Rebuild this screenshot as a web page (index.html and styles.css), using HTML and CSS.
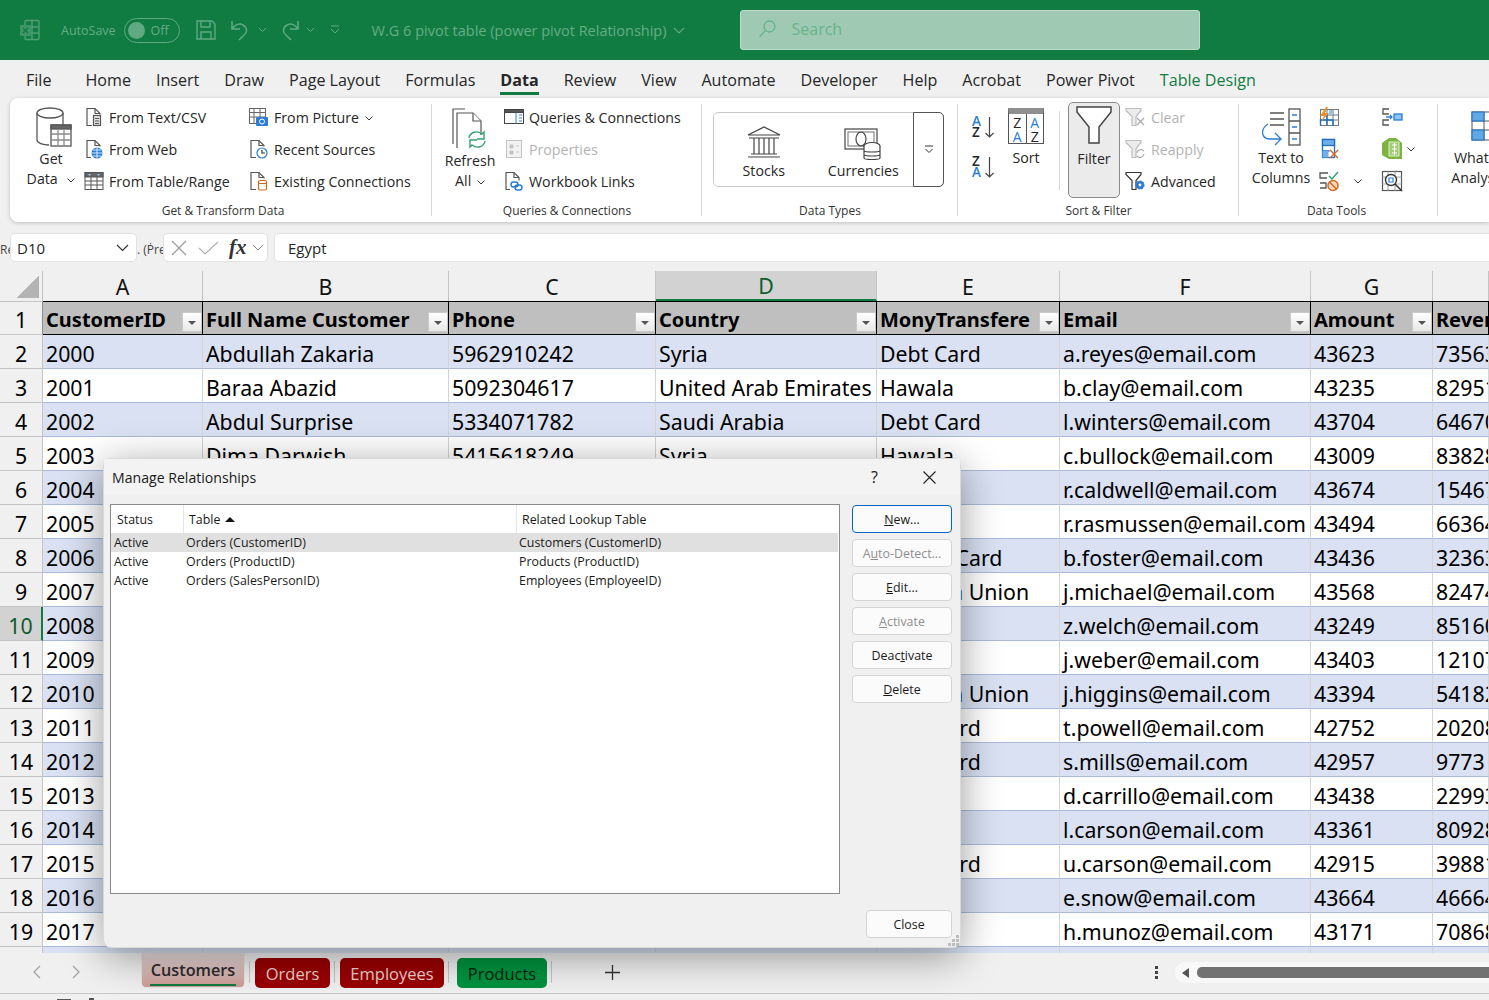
FILE: index.html
```html
<!DOCTYPE html>
<html lang="en">

<head>
    <meta charset="UTF-8">
    <meta name="viewport" content="width=device-width, initial-scale=1.0">
    <title>W.G 6 pivot table (power pivot Relationship)</title>
    <link rel="stylesheet" href="styles.css">
</head>

<body>
    <!-- title bar -->
    <header class="titlebar">
        <svg class="app-logo" width="22" height="22" viewBox="0 0 22 22" fill="none" stroke="#4f9f74" stroke-width="1.4"><rect x="6" y="1.500" width="14" height="19" rx="1"/><path d="M13 2v18M6 8h14M6 14h14"/><rect x="1" y="6" width="11" height="11" fill="#3f9467" stroke="none"/><path d="M4 9l5 5M9 9l-5 5" stroke="#0f7b40"/></svg>
        <span class="autosave">AutoSave</span>
        <span class="toggle"><i></i>Off</span>
        <svg class="tb-ic save" width="22" height="22" viewBox="0 0 22 22" fill="none" stroke="#5fa983" stroke-width="1.4"><path d="M2 2h15l3 3v15H2z"/><path d="M6 2v6h9V2M6 20v-7h10v7"/></svg>
        <svg class="tb-ic" width="22" height="22" viewBox="0 0 22 22" fill="none" stroke="#5fa983" stroke-width="1.5"><path d="M2 2v8h8M2 10c3-5 8-6 11-4 5 3 4 8 1 10l-5 5"/></svg>
        <svg class="tb-chev" width="9" height="6" viewBox="0 0 9 6" fill="none" stroke="#5fa983"><path d="M1 1l3.500 3.500L8 1"/></svg>
        <svg class="tb-ic" width="22" height="22" viewBox="0 0 22 22" fill="none" stroke="#5fa983" stroke-width="1.5"><path d="M20 2v8h-8M20 10c-3-5-8-6-11-4-5 3-4 8-1 10l5 5"/></svg>
        <svg class="tb-chev" width="9" height="6" viewBox="0 0 9 6" fill="none" stroke="#5fa983"><path d="M1 1l3.500 3.500L8 1"/></svg>
        <svg class="tb-more" width="10" height="10" viewBox="0 0 10 10" fill="none" stroke="#5fa983"><path d="M1 1h8M1 4l4 4 4-4"/></svg>
        <span class="doc-title">W.G 6 pivot table (power pivot Relationship)</span>
        <svg class="doc-chev" width="12" height="7" viewBox="0 0 12 7" fill="none" stroke="#5fa983" stroke-width="1.2"><path d="M1 1l5 5 5-5"/></svg>
        <div class="search">
            <svg width="20" height="20" viewBox="0 0 20 20" fill="none" stroke="#66b58a" stroke-width="1.3"><circle cx="11.500" cy="7.500" r="5.500"/><path d="M7.500 11.500L1.500 18"/></svg>
            <span>Search</span>
        </div>
    </header>

    <!-- menu tabs -->
    <nav class="menu">
        <span class="menu-file">File</span>
        <span>Home</span>
        <span>Insert</span>
        <span>Draw</span>
        <span>Page Layout</span>
        <span>Formulas</span>
        <span class="active">Data</span>
        <span>Review</span>
        <span>View</span>
        <span>Automate</span>
        <span>Developer</span>
        <span>Help</span>
        <span>Acrobat</span>
        <span>Power Pivot</span>
        <span class="menu-green">Table Design</span>
    </nav>

    <!-- ribbon -->
    <section class="ribbon">
        <div class="group g-transform">
            <div class="group-body">
                <div class="big get-data">
                    <svg width="38" height="42" viewBox="0 0 38 42" fill="none" stroke="#555" stroke-width="1.300"><ellipse cx="15" cy="6" rx="13" ry="5"/><path d="M2 6v27c0 3 6 5 12 5M28 6v12"/><rect x="16" y="18" width="20" height="21" fill="#fff"/><rect x="16" y="18" width="20" height="4" fill="#666"/><path d="M16 27h20M16 33h20M23 22v17M29 22v17" stroke="#8a8a8a"/></svg>
                    <span>Get</span>
                    <span>Data <svg class="chev" width="8" height="5" viewBox="0 0 8 5" fill="none" stroke="#333"><path d="M.5.500L4 4 7.500.500"/></svg></span>
                </div>
                <div class="small-col col-a">
                    <div class="sm"><svg width="22" height="20" viewBox="-1 0 22 20" fill="none" stroke="#555" stroke-width="1.200"><path d="M8 18.500H3v-17h8l5 5v1"/><path d="M11 1.500v5h5"/><rect x="9.500" y="8.500" width="7" height="10" fill="#e4e4e4"/><path d="M11 11.500h4M11 14h4M11 16.500h4"/></svg><span>From Text/CSV</span></div>
                    <div class="sm"><svg width="22" height="20" viewBox="-1 0 22 20" fill="none" stroke="#555" stroke-width="1.200"><path d="M7 18.500H3v-17h8l5 5v1"/><path d="M11 1.500v5h5"/><circle cx="13" cy="14" r="5.500" fill="#2b7cd3" stroke="none"/><path d="M7.500 14h11M13 8.500v11M9 11h8M9 17h8" stroke="#fff" stroke-width=".8"/></svg><span>From Web</span></div>
                    <div class="sm"><svg width="22" height="20" viewBox="0 0 22 20" fill="#fff" stroke="#555"><rect x="2" y="1.500" width="18" height="17"/><rect x="2" y="1.500" width="18" height="4.500" fill="#666"/><path d="M2 10h18M2 14h18M8 6v12M14 6v12"/><path d="M5 3l1.500 2L8 3zM14 3l1.500 2L17 3z" fill="#8cc8f5" stroke="none"/></svg><span>From Table/Range</span></div>
                </div>
                <div class="small-col col-b">
                    <div class="sm"><svg width="22" height="20" viewBox="0 0 22 20" fill="#fff" stroke="#666"><rect x="1.500" y="1.500" width="16" height="15"/><path d="M1.500 5.500h16M1.500 10h16M6 1.500v15M12 1.500v15"/><rect x="8" y="10" width="12" height="9" rx="1" fill="#2b7cd3" stroke="none"/><circle cx="14" cy="14.500" r="2.500" fill="#2b7cd3" stroke="#fff"/></svg><span>From Picture <svg class="chev" width="8" height="5" viewBox="0 0 8 5" fill="none" stroke="#333"><path d="M.5.500L4 4 7.500.500"/></svg></span></div>
                    <div class="sm"><svg width="22" height="20" viewBox="0 0 22 20" fill="none" stroke="#555" stroke-width="1.200"><path d="M8 18.500H3v-17h8l5 5v1"/><path d="M11 1.500v5h5"/><circle cx="14" cy="14" r="5" fill="#fff" stroke="#2b7cd3"/><path d="M14 11v3h3" stroke="#333"/></svg><span>Recent Sources</span></div>
                    <div class="sm"><svg width="22" height="20" viewBox="0 0 22 20" fill="none" stroke="#555" stroke-width="1.200"><path d="M8 18.500H3v-17h8l5 5v1"/><path d="M11 1.500v5h5"/><rect x="10.500" y="9.500" width="8" height="9.500" rx="1.500" fill="#fff" stroke="#d4691d"/><path d="M10.500 12.500h8" stroke="#d4691d"/></svg><span>Existing Connections</span></div>
                </div>
            </div>
            <div class="group-label">Get &amp; Transform Data</div>
        </div>

        <div class="group g-queries">
            <div class="group-body">
                <div class="big refresh">
                    <svg width="36" height="44" viewBox="0 0 36 44" fill="#fff" stroke="#555" stroke-width="1.200"><path d="M1 36V1h12"/><path d="M5 40V5h16l8 8v14"/><path d="M21 5v8h8"/><path d="M17 30c1-6 8-8 13-4l2-2v7h-7" stroke="#33a06f" fill="none" stroke-width="1.400"/><path d="M33 33c-1 6-8 8-13 4l-2 2v-7h7" stroke="#33a06f" fill="none" stroke-width="1.400"/></svg>
                    <span>Refresh</span>
                    <span>All <svg class="chev" width="8" height="5" viewBox="0 0 8 5" fill="none" stroke="#333"><path d="M.5.500L4 4 7.500.500"/></svg></span>
                </div>
                <div class="small-col col-q">
                    <div class="sm"><svg width="22" height="20" viewBox="0 0 22 20" fill="#fff" stroke="#444"><rect x="1.500" y="2.500" width="19" height="14"/><rect x="1.500" y="2.500" width="19" height="3" fill="#555"/><path d="M13 5.500v11" stroke="#2b7cd3"/><path d="M16 8h3M16 11h3M16 14h3" stroke="#2b7cd3"/></svg><span>Queries &amp; Connections</span></div>
                    <div class="sm off"><svg width="22" height="20" viewBox="0 0 22 20" fill="#f2f2f2" stroke="#c4c4c4"><rect x="3.500" y="1.500" width="15" height="17"/><path d="M7 6h3v3H7zM7 12h3v3H7zM13 7h3M13 13h3" fill="#c4c4c4"/></svg><span>Properties</span></div>
                    <div class="sm"><svg width="22" height="20" viewBox="0 0 22 20" fill="none" stroke="#555" stroke-width="1.200"><path d="M7 18.500H3v-17h8l5 5v3"/><path d="M11 1.500v5h5"/><rect x="8" y="11" width="7" height="5" rx="2.500" stroke="#2b7cd3" stroke-width="1.400"/><rect x="12" y="14" width="7" height="5" rx="2.500" stroke="#2b7cd3" stroke-width="1.400"/></svg><span>Workbook Links</span></div>
                </div>
            </div>
            <div class="group-label">Queries &amp; Connections</div>
        </div>

        <div class="group g-types">
            <div class="group-body">
                <div class="gallery">
                    <div class="gallery-item stocks">
                        <svg width="36" height="32" viewBox="0 0 36 32" fill="none" stroke="#444" stroke-width="1.200"><path d="M2 9L18 1l16 8zM3 12h30M5 28h26M2 31h32M8 12v16M13 12v16M18 12v16M23 12v16M28 12v16"/></svg>
                        <span>Stocks</span>
                    </div>
                    <div class="gallery-item currencies">
                        <svg width="38" height="34" viewBox="0 0 38 34" fill="none" stroke="#444" stroke-width="1.200"><rect x="1" y="2" width="32" height="20"/><rect x="4" y="5" width="26" height="14" stroke="#888"/><ellipse cx="17" cy="12" rx="5" ry="7"/><ellipse cx="28" cy="19" rx="8" ry="3.500" fill="#fff"/><path d="M20 19v12c0 2 16 2 16 0V19M20 23.500c0 2 16 2 16 0M20 27.500c0 2 16 2 16 0" fill="#fff"/></svg>
                        <span>Currencies</span>
                    </div>
                    <div class="gallery-more">
                        <svg width="10" height="9" viewBox="0 0 10 9" fill="none" stroke="#333"><path d="M1 1h8M1.500 4L5 7.500 8.500 4"/></svg>
                    </div>
                </div>
            </div>
            <div class="group-label">Data Types</div>
        </div>

        <div class="group g-sort">
            <div class="group-body">
                <div class="sort-arrows">
                    <div class="az"><span class="az-letters"><b class="blue">A</b><b>Z</b></span><svg width="9" height="21" viewBox="0 0 9 21" fill="none" stroke="#444" stroke-width="1.200"><path d="M4.500 0v20M.5 16l4 4 4-4"/></svg></div>
                    <div class="az"><span class="az-letters"><b>Z</b><b class="blue">A</b></span><svg width="9" height="21" viewBox="0 0 9 21" fill="none" stroke="#444" stroke-width="1.200"><path d="M4.500 0v20M.5 16l4 4 4-4"/></svg></div>
                </div>
                <div class="big sort-big">
                    <div class="sort-icon"><span>Z<br><b class="blue">A</b></span><span><b class="blue">A</b><br>Z</span></div>
                    <span>Sort</span>
                </div>
                <div class="sort-rule"></div>
                <div class="big filter-btn">
                    <svg width="36" height="38" viewBox="0 0 36 38" fill="#fff" stroke="#444" stroke-width="1.500"><path d="M1 1h34v5L23 21v16H13V21L1 6z"/></svg>
                    <span>Filter</span>
                </div>
                <div class="small-col col-f">
                    <div class="sm off"><svg width="22" height="20" viewBox="0 0 22 20" fill="none" stroke="#bdbdbd" stroke-width="1.200"><path d="M1 1.500h15v2l-5 6v9H7v-9L1 3.500z" fill="#ececec"/><path d="M12 11l7 7M19 11l-7 7" stroke="#a8a8a8"/></svg><span>Clear</span></div>
                    <div class="sm off"><svg width="22" height="20" viewBox="0 0 22 20" fill="none" stroke="#bdbdbd" stroke-width="1.200"><path d="M1 1.500h15v2l-5 6v9H7v-9L1 3.500z" fill="#ececec"/><path d="M12 14a4 4 0 0 1 7-2M19 15a4 4 0 0 1-7 2" stroke="#a8a8a8"/></svg><span>Reapply</span></div>
                    <div class="sm"><svg width="22" height="20" viewBox="0 0 22 20" fill="none" stroke="#333" stroke-width="1.200"><path d="M1 1.500h15v2l-5 6v9H7v-9L1 3.500z"/><circle cx="15" cy="14" r="4" fill="#2b7cd3" stroke="#2b7cd3" stroke-dasharray="2 1"/><circle cx="15" cy="14" r="1.400" fill="#fff" stroke="none"/></svg><span>Advanced</span></div>
                </div>
            </div>
            <div class="group-label">Sort &amp; Filter</div>
        </div>

        <div class="group g-tools">
            <div class="group-body">
                <div class="big text-cols">
                    <svg width="42" height="40" viewBox="0 0 42 40" fill="none" stroke="#555" stroke-width="1.300"><path d="M10 5h14M10 11h14M10 17h14"/><rect x="29" y="1" width="11" height="36" fill="#fff"/><path d="M29 13h11M29 25h11"/><path d="M32 7h5M32 19h5M32 31h5" stroke="#2b7cd3"/><path d="M8 16c-8 5-7 15 2 15h10M15 25l6 6-6 6" stroke="#2b7cd3"/></svg>
                    <span>Text to</span>
                    <span>Columns</span>
                </div>
                <div class="tool-col tool-a">
                    <div class="tool"><svg width="22" height="22" viewBox="0 0 22 22" fill="none" stroke="#777"><rect x="2.500" y="3.500" width="18" height="16"/><path d="M2.500 9h18M2.500 14h18M9 3.500v16M15 3.500v16"/><path d="M2.500 19.500V14H15v5.500M9 9v10" stroke="#1c6fc1" stroke-width="1.400"/><path d="M8 1L2 10h4l-3 6 8-9H7l3-6z" fill="#e8912d" stroke="none"/><path d="M11 4l4 0v5h-4z" fill="#8cc3f0" stroke="none"/></svg></div>
                    <div class="tool"><svg width="22" height="22" viewBox="0 0 22 22" fill="none"><rect x="4.500" y="1.500" width="12" height="18" fill="#fff" stroke="#1c6fc1" stroke-width="1.300"/><rect x="4.500" y="1.500" width="12" height="6" fill="#6fb0e8" stroke="#1c6fc1" stroke-width="1.300"/><path d="M4.500 13h7" stroke="#1c6fc1" stroke-width="1.300"/><rect x="4.500" y="13" width="6" height="6.500" fill="#6fb0e8"/><path d="M12 12l8 8M20 12l-8 8" stroke="#d4691d" stroke-width="1.400"/></svg></div>
                    <div class="tool"><svg width="22" height="22" viewBox="0 0 22 22" fill="none" stroke="#555" stroke-width="1.300"><path d="M10 3H2v5h7M2 13h6v5H2"/><path d="M11 6l3 3 6-7" stroke="#33a06f" stroke-width="1.500"/><circle cx="15" cy="15.500" r="5" fill="#f6d9c2" stroke="#d4691d" stroke-width="1.500"/><path d="M11.500 12l7 7" stroke="#d4691d" stroke-width="1.500"/></svg><svg class="chev tool-chev" width="8" height="5" viewBox="0 0 8 5" fill="none" stroke="#333"><path d="M.5.500L4 4 7.500.500"/></svg></div>
                </div>
                <div class="tool-col tool-b">
                    <div class="tool"><svg width="22" height="22" viewBox="0 0 22 22" fill="none" stroke="#555" stroke-width="1.300"><path d="M8 3H2v5h6M8 14H2v5h6"/><rect x="13" y="8" width="8" height="6" fill="#8cc3f0" stroke="#2b7cd3"/><path d="M5 11h6M9 9l2 2-2 2" stroke="#2b7cd3"/></svg></div>
                    <div class="tool"><svg width="22" height="24" viewBox="0 0 22 24"><path d="M1 6l7-5h7l6 5v16H8l-7-4z" fill="#7cb342"/><path d="M8 5v14M8 5h10v14H8" fill="#dff0c8" fill-opacity=".4" stroke="#dff0c8"/><path d="M11 8h5M11 12h5M11 16h5M13.500 6v12" stroke="#fff"/></svg><svg class="chev tool-chev" width="8" height="5" viewBox="0 0 8 5" fill="none" stroke="#333"><path d="M.5.500L4 4 7.500.500"/></svg></div>
                    <div class="tool"><svg width="22" height="22" viewBox="0 0 22 22" fill="none" stroke="#555" stroke-width="1.200"><rect x="1.500" y="1.500" width="19" height="19"/><path d="M1.500 7h19M1.500 14h19M7 1.500v19M14 1.500v19" stroke="#aaa"/><circle cx="10" cy="10" r="5.500" fill="#fff" stroke="#333" stroke-width="1.400"/><path d="M8 8h4v4H8z" stroke="#2b7cd3"/><path d="M14 14l7 7" stroke="#333" stroke-width="1.500"/></svg></div>
                </div>
            </div>
            <div class="group-label">Data Tools</div>
        </div>

        <div class="group g-forecast">
            <div class="group-body">
                <div class="big whatif">
                    <svg width="40" height="30" viewBox="0 0 40 30" fill="#fff" stroke="#555"><rect x="1" y="1" width="38" height="28"/><path d="M1 10h38M1 19h38M13 1v28M26 1v28"/><rect x="1" y="1" width="12" height="9" fill="#62a8e5" stroke="#1c6fc1"/><rect x="1" y="19" width="12" height="10" fill="#62a8e5" stroke="#1c6fc1"/></svg>
                    <span>What-If</span>
                    <span>Analysis</span>
                </div>
            </div>
        </div>
    </section>

    <!-- formula bar -->
    <section class="formula-row">
        <span class="stray stray-l">Re</span>
        <div class="namebox">
            <span>D10</span>
            <svg width="13" height="8" viewBox="0 0 13 8" fill="none" stroke="#333" stroke-width="1.200"><path d="M1 1l5.500 5.500L12 1"/></svg>
        </div>
        <span class="stray stray-m">. (Ṗre</span>
        <div class="fx-box">
            <svg width="18" height="18" viewBox="0 0 18 18" fill="none" stroke="#9a9a9a" stroke-width="1.200"><path d="M2 2l14 14M16 2L2 16"/></svg>
            <svg width="21" height="18" viewBox="0 0 21 18" fill="none" stroke="#b0b0b0" stroke-width="1.200"><path d="M1 9l6 6L20 3"/></svg>
            <i class="fx">fx</i>
            <svg width="12" height="7" viewBox="0 0 12 7" fill="none" stroke="#888"><path d="M1 1l5 5 5-5"/></svg>
        </div>
        <div class="formula-input">Egypt</div>
    </section>

    <!-- sheet -->
    <section class="sheet">
        <table class="grid">
            <colgroup>
                <col class="c-rh"><col class="c-a"><col class="c-b"><col class="c-c"><col class="c-d"><col class="c-e"><col class="c-f"><col class="c-g"><col class="c-h">
            </colgroup>
            <thead>
                <tr class="letters">
                    <th class="corner"><span class="corner-tri"></span></th>
                    <th>A</th><th>B</th><th>C</th><th class="sel-col">D</th><th>E</th><th>F</th><th>G</th><th></th>
                </tr>
                <tr class="heads">
                    <th class="rh">1</th>
                    <th>CustomerID<span class="drop"></span></th>
                    <th>Full Name Customer<span class="drop"></span></th>
                    <th>Phone<span class="drop"></span></th>
                    <th>Country<span class="drop"></span></th>
                    <th>MonyTransfere<span class="drop"></span></th>
                    <th>Email<span class="drop"></span></th>
                    <th>Amount<span class="drop"></span></th>
                    <th>Revenue</th>
                </tr>
            </thead>
            <tbody>
                <tr><th class="rh">2</th><td>2000</td><td>Abdullah Zakaria</td><td>5962910242</td><td>Syria</td><td>Debt Card</td><td>a.reyes@email.com</td><td>43623</td><td>73563</td></tr>
                <tr><th class="rh">3</th><td>2001</td><td>Baraa Abazid</td><td>5092304617</td><td>United Arab Emirates</td><td>Hawala</td><td>b.clay@email.com</td><td>43235</td><td>82951</td></tr>
                <tr><th class="rh">4</th><td>2002</td><td>Abdul Surprise</td><td>5334071782</td><td>Saudi Arabia</td><td>Debt Card</td><td>l.winters@email.com</td><td>43704</td><td>64670</td></tr>
                <tr><th class="rh">5</th><td>2003</td><td>Dima Darwish</td><td>5415618249</td><td>Syria</td><td>Hawala</td><td>c.bullock@email.com</td><td>43009</td><td>83828</td></tr>
                <tr><th class="rh">6</th><td>2004</td><td></td><td></td><td></td><td></td><td>r.caldwell@email.com</td><td>43674</td><td>15467</td></tr>
                <tr><th class="rh">7</th><td>2005</td><td></td><td></td><td></td><td></td><td>r.rasmussen@email.com</td><td>43494</td><td>66364</td></tr>
                <tr><th class="rh">8</th><td>2006</td><td></td><td></td><td></td><td>Master Card</td><td>b.foster@email.com</td><td>43436</td><td>32363</td></tr>
                <tr><th class="rh">9</th><td>2007</td><td></td><td></td><td></td><td>Western Union</td><td>j.michael@email.com</td><td>43568</td><td>82474</td></tr>
                <tr><th class="rh rh-sel">10</th><td>2008</td><td></td><td></td><td></td><td></td><td>z.welch@email.com</td><td>43249</td><td>85160</td></tr>
                <tr><th class="rh">11</th><td>2009</td><td></td><td></td><td></td><td></td><td>j.weber@email.com</td><td>43403</td><td>12107</td></tr>
                <tr><th class="rh">12</th><td>2010</td><td></td><td></td><td></td><td>Western Union</td><td>j.higgins@email.com</td><td>43394</td><td>54182</td></tr>
                <tr><th class="rh">13</th><td>2011</td><td></td><td></td><td></td><td>Debt Card</td><td>t.powell@email.com</td><td>42752</td><td>20208</td></tr>
                <tr><th class="rh">14</th><td>2012</td><td></td><td></td><td></td><td>Debt Card</td><td>s.mills@email.com</td><td>42957</td><td>9773</td></tr>
                <tr><th class="rh">15</th><td>2013</td><td></td><td></td><td></td><td></td><td>d.carrillo@email.com</td><td>43438</td><td>22993</td></tr>
                <tr><th class="rh">16</th><td>2014</td><td></td><td></td><td></td><td></td><td>l.carson@email.com</td><td>43361</td><td>80928</td></tr>
                <tr><th class="rh">17</th><td>2015</td><td></td><td></td><td></td><td>Debt Card</td><td>u.carson@email.com</td><td>42915</td><td>39881</td></tr>
                <tr><th class="rh">18</th><td>2016</td><td></td><td></td><td></td><td></td><td>e.snow@email.com</td><td>43664</td><td>46664</td></tr>
                <tr><th class="rh">19</th><td>2017</td><td></td><td></td><td></td><td></td><td>h.munoz@email.com</td><td>43171</td><td>70868</td></tr>
                <tr><th class="rh"></th><td></td><td></td><td></td><td></td><td></td><td></td><td></td><td></td></tr>
            </tbody>
        </table>
    </section>

    <!-- sheet tabs -->
    <footer class="tabs">
        <div class="tab-nav">
            <svg width="9" height="14" viewBox="0 0 9 14" fill="none" stroke="#a0a0a0" stroke-width="1.200"><path d="M8 1L2 7l6 6"/></svg>
            <svg width="9" height="14" viewBox="0 0 9 14" fill="none" stroke="#a0a0a0" stroke-width="1.200"><path d="M1 1l6 6-6 6"/></svg>
        </div>
        <div class="tab tab-current"><span>Customers</span></div>
        <i class="tab-sep"></i>
        <div class="tab tab-red">Orders</div>
        <i class="tab-sep"></i>
        <div class="tab tab-red tab-emp">Employees</div>
        <i class="tab-sep"></i>
        <div class="tab tab-green">Products</div>
        <i class="tab-sep"></i>
        <svg class="tab-add" width="15" height="15" viewBox="0 0 15 15" stroke="#333" stroke-width="1.300"><path d="M7.500 0v15M0 7.500h15"/></svg>
        <span class="tab-dots"><i></i><i></i><i></i></span>
        <div class="hscroll">
            <span class="hscroll-arrow"></span>
            <span class="hscroll-thumb"></span>
        </div>
    </footer>
    <div class="status">
        <i class="status-mark"></i>
        <i class="status-tick"></i>
    </div>

    <!-- Manage Relationships dialog -->
    <div class="dialog">
        <div class="dialog-title">
            <span>Manage Relationships</span>
            <span class="dialog-help">?</span>
            <svg width="13" height="13" viewBox="0 0 13 13" stroke="#222" stroke-width="1.100"><path d="M.5.500l12 12M12.500.500l-12 12"/></svg>
        </div>
        <div class="dialog-body">
            <div class="rel-list">
                <div class="rel-head">
                    <span class="r-status">Status</span>
                    <span class="r-table">Table <i class="sort-up"></i></span>
                    <span class="r-lookup">Related Lookup Table</span>
                </div>
                <div class="rel-row selected"><span class="r-status">Active</span><span class="r-table">Orders (CustomerID)</span><span class="r-lookup">Customers (CustomerID)</span></div>
                <div class="rel-row"><span class="r-status">Active</span><span class="r-table">Orders (ProductID)</span><span class="r-lookup">Products (ProductID)</span></div>
                <div class="rel-row"><span class="r-status">Active</span><span class="r-table">Orders (SalesPersonID)</span><span class="r-lookup">Employees (EmployeeID)</span></div>
            </div>
            <div class="dialog-btns">
                <button class="btn btn-primary"><u>N</u>ew...</button>
                <button class="btn" disabled>A<u>u</u>to-Detect...</button>
                <button class="btn"><u>E</u>dit...</button>
                <button class="btn" disabled><u>A</u>ctivate</button>
                <button class="btn">Deac<u>t</u>ivate</button>
                <button class="btn"><u>D</u>elete</button>
            </div>
        </div>
        <div class="dialog-foot">
            <button class="btn btn-close">Close</button>
        </div>
        <svg class="grip" width="12" height="12" viewBox="0 0 12 12" fill="#bdbdbd"><path d="M8 0h3v3H8zM4 4h3v3H4zM8 4h3v3H8zM0 8h3v3H0zM4 8h3v3H4zM8 8h3v3H8z"/></svg>
    </div>
</body>

</html>
```

FILE: styles.css
```css
* {
    margin: 0;
    padding: 0;
    box-sizing: border-box;
}

body {
    width: 1489px;
    height: 1000px;
    overflow: hidden;
    position: relative;
    display: flex;
    flex-direction: column;
    background: #f0f0f0;
    color: #262626;
    font-family: "Open Sans", "Noto Sans", sans-serif;
    font-size: 14.200px;
}

svg {
    display: block;
    flex-shrink: 0;
}

.blue {
    color: #2b7cd3;
}

/* title bar */
.titlebar {
    height: 60px;
    flex-shrink: 0;
    background: #107c41;
    display: flex;
    align-items: center;
    padding-left: 19px;
    color: #66ad85;
}

.autosave {
    font-size: 12.500px;
    margin-left: 20px;
}

.toggle {
    width: 56px;
    height: 25px;
    margin-left: 8px;
    border: 1px solid #5fa983;
    border-radius: 13px;
    display: flex;
    align-items: center;
    padding-left: 3px;
    gap: 6px;
    font-size: 12.500px;
}

.toggle i {
    width: 17px;
    height: 17px;
    border-radius: 50%;
    background: #5fa983;
}

.save {
    margin-left: 15px;
    margin-right: 13px;
}

.tb-chev {
    margin-left: 6px;
    margin-right: 11px;
}

.tb-more {
    margin-left: 4px;
}

.doc-title {
    font-size: 14.500px;
    margin-left: 32px;
    white-space: nowrap;
}

.doc-chev {
    margin-left: 6px;
}

.search {
    width: 460px;
    height: 40px;
    margin-left: 55px;
    background: #a0c9b3;
    border: 1px solid #c0dccd;
    border-radius: 3px;
    display: flex;
    align-items: center;
    gap: 14px;
    padding: 0 0 2px 17px;
    font-size: 16px;
    color: #66b58a;
}

/* menu */
.menu {
    height: 38px;
    flex-shrink: 0;
    display: flex;
    align-items: center;
    padding: 2px 0 0 26px;
    gap: 25px;
    font-size: 16.100px;
    color: #262626;
}

.menu span {
    position: relative;
    white-space: nowrap;
}

.menu-file {
    margin-right: 9px;
}

.menu .active {
    font-weight: 700;
}

.menu .active::after {
    content: "";
    position: absolute;
    left: 0;
    right: 0;
    bottom: -4px;
    height: 3px;
    background: #107c41;
}

.menu-green {
    color: #107c41;
}

/* ribbon */
.ribbon {
    height: 124px;
    flex-shrink: 0;
    margin-left: 10px;
    background: #fff;
    border-radius: 8px 0 0 8px;
    box-shadow: 0 1px 4px rgba(0, 0, 0, 0.2);
    display: flex;
    overflow: hidden;
    padding-top: 3px;
}

.group {
    display: flex;
    flex-direction: column;
    flex-shrink: 0;
    position: relative;
}

.group::after {
    content: "";
    position: absolute;
    right: 0;
    top: 3px;
    bottom: 6px;
    width: 1px;
    background: #d6d6d6;
}

.group-body {
    flex: 1;
    display: flex;
    min-height: 0;
}

.group-label {
    font-size: 12px;
    height: 20px;
    line-height: 18px;
    text-align: center;
    color: #333;
}

.g-transform { width: 422px; }
.g-transform .group-label { padding-left: 4px; }
.g-queries { width: 270px; }
.g-types { width: 256px; }
.g-sort { width: 281px; }
.g-tools { width: 199px; }
.g-tools .group-label { padding-right: 4px; }
.g-forecast { width: 100px; }
.g-forecast::after { display: none; }

.big {
    display: flex;
    flex-direction: column;
    align-items: center;
    line-height: 20px;
    white-space: nowrap;
}

.chev {
    display: inline-block;
    vertical-align: middle;
    margin-left: 2px;
}

.small-col {
    display: flex;
    flex-direction: column;
}

.sm {
    height: 32px;
    display: flex;
    align-items: center;
    gap: 4px;
    white-space: nowrap;
}

.sm.off {
    color: #b3b3b3;
}

.get-data {
    width: 46px;
    margin-left: 18px;
    padding-top: 5px;
}

.get-data svg:first-child {
    margin: 1px 0 0 6px;
}

.col-a {
    margin-left: 9px;
    width: 165px;
}

.refresh {
    width: 50px;
    margin-left: 13px;
    padding-top: 7px;
}

.refresh svg:first-child {
    margin-bottom: -1px;
}

.col-q {
    margin-left: 8px;
}

.gallery {
    width: 231px;
    height: 75px;
    margin: 11px 0 0 11px;
    border: 1px solid #c9c9c9;
    border-radius: 5px;
    display: flex;
}

.gallery-item {
    width: 100px;
    display: flex;
    flex-direction: column;
    align-items: center;
    justify-content: flex-end;
    padding-bottom: 6px;
    gap: 3px;
}

.currencies {
    gap: 0;
}

.gallery-more {
    width: 31px;
    margin: -1px -1px -1px 0;
    border: 1px solid #555;
    border-radius: 0 5px 5px 0;
    display: flex;
    align-items: center;
    justify-content: center;
}

.sort-arrows {
    width: 24px;
    margin: 15px 0 0 14px;
    display: flex;
    flex-direction: column;
    gap: 18px;
}

.az {
    display: flex;
    align-items: center;
    gap: 2px;
}

.az-letters {
    width: 11px;
    display: flex;
    flex-direction: column;
    font-size: 13.500px;
    line-height: 11px;
}

.az-letters b {
    font-weight: 600;
}

.sort-big {
    width: 38px;
    margin-left: 11px;
    padding-top: 7px;
    gap: 4px;
}

.sort-icon {
    width: 36px;
    height: 36px;
    border: 1px solid #555;
    border-top: 6px solid #8f8f8f;
    display: flex;
    font-size: 14px;
    line-height: 13.500px;
    text-align: center;
    background: #fff;
}

.sort-icon span {
    flex: 1;
    padding-top: 2px;
}

.sort-icon span + span {
    border-left: 1px solid #555;
}

.sort-icon b {
    font-weight: 400;
}

.sort-rule {
    width: 1px;
    height: 79px;
    margin: 10px 8px 0 14px;
    background: #d6d6d6;
}

.filter-btn {
    width: 52px;
    height: 96px;
    margin-top: 1px;
    background: #ebebeb;
    border: 1px solid #8a8a8a;
    border-radius: 5px;
    padding-top: 3px;
    gap: 5px;
}

.col-f {
    margin-left: 5px;
}

.text-cols {
    width: 60px;
    margin-left: 12px;
    padding-top: 7px;
}

.tool-col {
    display: flex;
    flex-direction: column;
}

.tool {
    height: 32px;
    display: flex;
    align-items: center;
}

.tool-a {
    width: 63px;
    margin-left: 7px;
}

.tool-chev {
    margin-left: 14px;
}

.tool-b .tool-chev {
    margin-left: 4px;
}

.whatif {
    width: 60px;
    margin-left: 10px;
    padding-top: 10px;
}

.whatif svg:first-child {
    margin: 0 0 7px 26px;
}

/* formula bar */
.formula-row {
    height: 49px;
    flex-shrink: 0;
    display: flex;
    align-items: center;
    padding: 11px 0 9px;
}

.stray {
    font-size: 12px;
    color: #444;
    white-space: nowrap;
    overflow: hidden;
    padding-top: 4px;
}

.stray-l {
    width: 10px;
}

.stray-m {
    width: 26px;
}

.namebox {
    width: 127px;
    height: 29px;
    background: #fff;
    border: 1px solid #e2e2e2;
    border-radius: 5px;
    display: flex;
    align-items: center;
    justify-content: space-between;
    padding: 0 7px 0 6px;
    font-size: 15px;
}

.fx-box {
    width: 105px;
    height: 29px;
    background: #fff;
    border: 1px solid #e2e2e2;
    border-radius: 5px;
    display: flex;
    align-items: center;
    padding-left: 6px;
    gap: 10px;
}

.fx {
    font-family: "Liberation Serif", serif;
    font-size: 21px;
    font-weight: 700;
    color: #333;
}

.fx-box svg:last-child {
    margin-left: -5px;
}

.formula-input {
    flex: 1;
    height: 29px;
    margin-left: 6px;
    background: #fff;
    border: 1px solid #e2e2e2;
    border-right: 0;
    border-radius: 5px 0 0 5px;
    display: flex;
    align-items: center;
    padding-left: 13px;
    font-size: 15px;
}

/* sheet */
.sheet {
    height: 682px;
    flex-shrink: 0;
    overflow: hidden;
    background: #fff;
}

.grid {
    width: 1489px;
    table-layout: fixed;
    border-collapse: separate;
    border-spacing: 0;
    color: #000;
    font-family: "Noto Sans", sans-serif;
    font-size: 21.300px;
    line-height: 26px;
}

.c-rh { width: 43px; }
.c-a { width: 160px; }
.c-b { width: 246px; }
.c-c { width: 207px; }
.c-d { width: 221px; }
.c-e { width: 183px; }
.c-f { width: 251px; }
.c-g { width: 122px; }
.c-h { width: 56px; }

.letters th {
    height: 30px;
    background: #f0f0f0;
    font-weight: 400;
    border-right: 1px solid #c4c4c4;
    padding-top: 2px;
    color: #111;
}

.letters .corner {
    position: relative;
}

.corner-tri {
    position: absolute;
    left: 17px;
    top: 5px;
    width: 22px;
    height: 22px;
    background: linear-gradient(135deg, transparent 50%, #b4b4b4 50%);
}

.letters .sel-col {
    background: #d2d2d2;
    border-bottom: 2px solid #107c41;
    color: #0e5c2f;
}

.rh {
    background: #f0f0f0;
    font-weight: 400;
    text-align: center;
    padding-top: 4px;
    border-right: 1px solid #c4c4c4;
    border-bottom: 1px solid #c4c4c4;
}

.rh-sel {
    background: #d2d2d2;
    color: #0e5c2f;
    border-right: 2px solid #107c41;
}

.heads th {
    height: 34px;
    position: relative;
    text-align: left;
    padding: 3px 0 0 3px;
    background: #bfbfbf;
    font-size: 20px;
    font-weight: 700;
    white-space: nowrap;
    overflow: hidden;
    border-top: 1px solid #000;
    border-bottom: 1px solid #000;
    border-right: 1px solid #000;
}

.heads th.rh {
    background: #f0f0f0;
    font-size: 21.300px;
    font-weight: 400;
    text-align: center;
    padding-left: 0;
    border-top: 1px solid #c4c4c4;
    border-bottom-color: #c4c4c4;
    border-right-color: #8c8c8c;
}

.drop {
    position: absolute;
    right: 0;
    top: 10px;
    width: 20px;
    height: 20px;
    background: linear-gradient(#fff, #e8e8e8);
    border: 1px solid #c8c8c8;
}

.drop::after {
    content: "";
    position: absolute;
    left: 5px;
    top: 8px;
    border: 4px solid transparent;
    border-top: 4px solid #555;
}

tbody td {
    height: 34px;
    padding: 4px 0 0 3px;
    white-space: nowrap;
    overflow: hidden;
    border-right: 1px solid #d4d4d4;
    border-bottom: 1px solid #a9bbdc;
}

tbody tr:nth-child(odd) td {
    background: #d9e1f2;
}

/* sheet tabs */
.tabs {
    height: 40px;
    flex-shrink: 0;
    display: flex;
    align-items: flex-start;
    background: #f0f0f0;
    font-size: 16.500px;
}

.tab-nav {
    width: 141px;
    height: 100%;
    display: flex;
    align-items: center;
    gap: 31px;
    padding: 0 0 2px 32px;
}

.tab {
    height: 30px;
    margin-top: 5px;
    border-radius: 5px;
    display: flex;
    align-items: center;
    justify-content: center;
}

.tab-current {
    width: 104px;
    height: 35px;
    margin-top: 0;
    border-radius: 0 0 5px 5px;
    background: linear-gradient(#e9dfde, #cd9a96);
    border: 1px solid #e6e6e6;
    border-top: 0;
    padding-top: 3px;
    font-weight: 600;
    color: #2b2b2b;
    font-size: 16.200px;
}

.tab-current span {
    border-bottom: 2px solid #107c41;
    padding: 0 1px 1px;
    line-height: 25px;
}

.tab-sep {
    width: 1px;
    height: 22px;
    margin: 8px 5px 0 4px;
    background: #c4c4c4;
}

.tab-red {
    width: 75px;
    background: #990000;
    color: #eccfcf;
}

.tab-emp {
    width: 104px;
}

.tab-green {
    width: 90px;
    margin-left: 3px;
    background: #00923f;
    color: #06230f;
}

.tab-add {
    margin: 12px 0 0 48px;
}

.tab-dots {
    margin: 13px 0 0 535px;
    display: flex;
    flex-direction: column;
    gap: 2px;
}

.tab-dots i {
    width: 3px;
    height: 3px;
    background: #444;
}

.hscroll {
    flex: 1;
    height: 21px;
    margin: 9px 0 0 17px;
    background: #f8f8f8;
    border-radius: 10px 0 0 10px;
    display: flex;
    align-items: center;
    padding-left: 7px;
}

.hscroll-arrow {
    border: 5px solid transparent;
    border-left: 0;
    border-right: 7px solid #555;
}

.hscroll-thumb {
    flex: 1;
    height: 11px;
    margin-left: 8px;
    background: #727272;
    border-radius: 5px 0 0 5px;
}

.status {
    flex: 1;
    border-top: 1px solid #c8c8c8;
    background: #f0f0f0;
    display: flex;
    align-items: flex-end;
    padding-left: 57px;
}

.status-mark {
    width: 14px;
    height: 1px;
    background: #555;
}

.status-tick {
    width: 5px;
    height: 2px;
    margin-left: 18px;
    background: #555;
}

/* dialog */
.dialog {
    position: absolute;
    left: 103px;
    top: 458px;
    width: 858px;
    height: 490px;
    background: #f0f0f0;
    border: 1px solid #d9d9d9;
    border-radius: 8px;
    box-shadow: 0 8px 40px rgba(0, 0, 0, 0.4);
    display: flex;
    flex-direction: column;
    padding: 0 8px 0 6px;
    font-size: 13px;
    color: #1a1a1a;
}

.dialog-title {
    height: 45px;
    margin: 0 -8px 0 -6px;
    padding: 0 24px 9px 8px;
    display: flex;
    align-items: center;
    font-size: 14.100px;
    background: linear-gradient(#f3f3f3 36px, #f0f0f0 36px);
}

.dialog-help {
    margin-left: auto;
    margin-right: 45px;
    font-size: 16px;
}

.dialog-body {
    display: flex;
    gap: 12px;
}

.rel-list {
    width: 730px;
    height: 390px;
    background: #fff;
    border: 1px solid #8a8a8a;
    font-size: 12.400px;
}

.rel-head {
    height: 28px;
    display: flex;
    align-items: center;
    padding-left: 6px;
}

.rel-head .r-status {
    width: 66px;
}

.rel-head span {
    height: 100%;
    display: flex;
    align-items: center;
}

.rel-head .r-table {
    width: 333px;
    border-left: 1px solid #e6e6e6;
    padding-left: 5px;
}

.rel-head .r-lookup {
    border-left: 1px solid #e6e6e6;
    padding-left: 5px;
}

.sort-up {
    border: 5px solid transparent;
    border-top: 0;
    border-bottom: 5px solid #111;
    margin-left: 5px;
}

.rel-row {
    height: 19px;
    display: flex;
    align-items: center;
    padding-left: 3px;
    margin-right: 1px;
}

.rel-row .r-status {
    width: 72px;
}

.rel-row .r-table {
    width: 333px;
}

.rel-row.selected {
    background: #e0e0e0;
}

.dialog-btns {
    display: flex;
    flex-direction: column;
    gap: 6px;
    padding-top: 1px;
}

.btn {
    width: 100px;
    height: 28px;
    background: #fbfbfb;
    border: 1px solid #d4d4d4;
    border-radius: 4px;
    font-family: inherit;
    font-size: 12.400px;
    color: #1a1a1a;
}

.btn:disabled {
    color: #8f8f8f;
}

.btn-primary {
    border: 1px solid #0067c0;
}

.dialog-foot {
    display: flex;
    justify-content: flex-end;
    margin-top: 16px;
}

.btn-close {
    width: 86px;
}

.grip {
    position: absolute;
    right: 0;
    bottom: 0;
}
```
